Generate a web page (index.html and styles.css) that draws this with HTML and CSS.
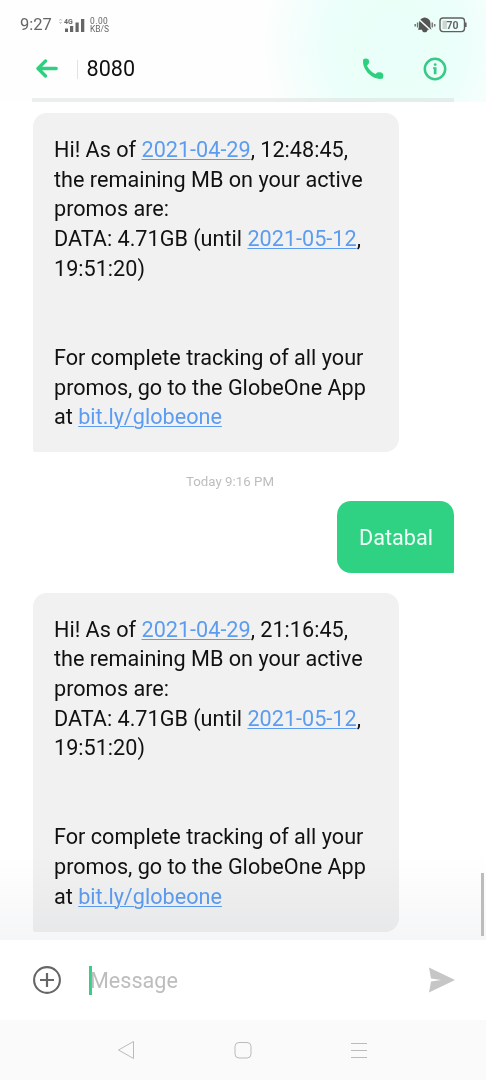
FILE: index.html
```html
<!DOCTYPE html>
<html lang="en">
<head>
<meta charset="utf-8">
<title>Messages</title>
<link rel="stylesheet" href="styles.css">
</head>
<body>
<div class="phone">
  <div class="top">
    <div class="status">
      <span class="clock">9:27</span>
      <svg class="signal" width="26" height="16" viewBox="0 0 26 16">
        <path d="M0.5 3.5 L1.5 2 L2.5 3.5 M0.5 5 L1.5 6.5 L2.5 5" fill="none" stroke="#aaa" stroke-width=".8"/>
        <text x="5" y="6.600" class="net">4G</text>
        <path d="M6 11.500h3v3.500H6zM11 9h3.200v6h-3.200zM16.500 5.500h3.200V15h-3.200zM22 2h3.300v13H22z" fill="#666"/>
      </svg>
      <div class="rate"><span>0.00</span><span>KB/S</span></div>
      <svg class="mute" width="22" height="18" viewBox="0 0 22 18">
        <path d="M10.500 1.500c-3.700.6-5.500 2.800-5.500 6v3.500l-1 2.700h13.500L16.500 11V7.500c0-3.200-1.900-5.400-6-6zM8 13.700h5.600c0 3.400-5.600 3.400-5.600 0z" fill="#555"/>
        <path d="M3.600 6.500v5M1.200 8v2.400M18.300 6.500v5M20.700 8v2.400" stroke="#777" stroke-width="1.500"/>
        <path d="M4 2.500l14 13" stroke="#effffa" stroke-width="1.700"/>
      </svg>
      <svg class="battery" width="28" height="16" viewBox="0 0 28 16">
        <rect x="1" y="1" width="24.500" height="13.600" rx="3" fill="none" stroke="#606060" stroke-width="1.400"/>
        <path d="M26.800 5.500v4.500" stroke="#606060" stroke-width="1.600"/>
        <path d="M3.500 3.500h4.500v8.500h-4.500z" fill="#ccd6d2"/>
        <text x="7.500" y="11.500" class="level">70</text>
      </svg>
    </div>
    <div class="header">
      <svg class="back" width="22" height="20" viewBox="0 0 22 20">
        <path d="M9.500 2L2 9.500l7.500 7.500M2.500 9.500h17.700" fill="none" stroke="#2dd07f" stroke-width="3.300" stroke-linecap="round" stroke-linejoin="round"/>
      </svg>
      <span class="divider"></span>
      <span class="title">8080</span>
      <svg class="call" width="22" height="22" viewBox="0 0 22 22">
        <path d="M1.300 1.200C2.500.2 5 .2 6.300 1.200 7.500 2.800 7.500 5 6.200 6.200L5 7.700C6.600 11.200 9.700 14.200 13.300 16L15 14.700C16.500 14 19.500 14.300 20.800 15.500 21.500 17 21.500 19 20.800 20.500 17 21.800 11.500 20.200 7 16 2.500 11.700.2 6 1.300 1.200Z" fill="#2dd07f"/>
      </svg>
      <svg class="info" width="24" height="24" viewBox="0 0 24 24">
        <circle cx="12" cy="12" r="10.200" fill="none" stroke="#38c989" stroke-width="2.500"/>
        <path d="M10 10.200h3.500v7h-2.700v-5.500h-.8z" fill="#38c989"/>
        <circle cx="12.200" cy="7.600" r="1.400" fill="#38c989"/>
      </svg>
    </div>
    <div class="rule"></div>
  </div>

  <div class="thread">
    <div class="bubble received">Hi! As of <a>2021-04-29</a>, 12:48:45,<br>the remaining MB on your active<br>promos are:<br>DATA: 4.71GB (until <a>2021-05-12</a>,<br>19:51:20)<br><br><br>For complete tracking of all your<br>promos, go to the GlobeOne App<br>at <a>bit.ly/globeone</a></div>
    <div class="stamp">Today 9:16 PM</div>
    <div class="bubble sent">Databal</div>
    <div class="bubble received second">Hi! As of <a>2021-04-29</a>, 21:16:45,<br>the remaining MB on your active<br>promos are:<br>DATA: 4.71GB (until <a>2021-05-12</a>,<br>19:51:20)<br><br><br>For complete tracking of all your<br>promos, go to the GlobeOne App<br>at <a>bit.ly/globeone</a></div>
    <div class="fade"></div>
    <div class="scrollbar"></div>
  </div>

  <div class="composer">
    <svg class="plus" width="28" height="28" viewBox="0 0 28 28">
      <circle cx="14" cy="14" r="12.900" fill="none" stroke="#666" stroke-width="2.100"/>
      <path d="M7 14h14M14 7v14" stroke="#666" stroke-width="2.200"/>
    </svg>
    <div class="field"><span class="caret"></span><span class="placeholder">Message</span></div>
    <svg class="send" width="28" height="28" viewBox="0 0 28 28">
      <path d="M1 1.500L27 14 1 26.500 3 15.500 13 14 3 12.500Z" fill="#c6c6c6"/>
    </svg>
  </div>

  <div class="nav">
    <svg width="18" height="20" viewBox="0 0 18 20"><path d="M16.500 1.500v17L1.500 10z" fill="none" stroke="#bbb" stroke-linejoin="round"/></svg>
    <svg width="18" height="18" viewBox="0 0 18 18"><rect x="1" y="1.500" width="16" height="15.500" rx="4" fill="none" stroke="#bbb"/></svg>
    <svg width="18" height="18" viewBox="0 0 18 18"><path d="M1 2.500h16M1 9.500h16M1 16.500h16" stroke="#bbb"/></svg>
  </div>
</div>
</body>
</html>
```

FILE: styles.css
```css
* { box-sizing: border-box; }

body {
  margin: 0;
  background: #fff;
  font-family: Roboto, "Liberation Sans", sans-serif;
}

svg { display: block; flex: none; }

.phone {
  width: 486px;
  height: 1080px;
  display: flex;
  flex-direction: column;
  overflow: hidden;
}

.top {
  height: 102px;
  background: radial-gradient(ellipse 135px 150px at 395px 45px, #eafff9 0%, #ecfffa 50%, rgba(255, 255, 255, 0) 100%), #fefefe;
}

.status {
  height: 40px;
  padding: 9px 20px 0;
  display: flex;
  align-items: center;
  color: #666;
}

.clock { width: 32px; font-size: 16.5px; line-height: 20px; }
.signal { margin-left: 7px; }
.net { font-size: 7px; font-weight: 700; fill: #666; }

.rate {
  display: flex;
  flex-direction: column;
  margin-left: 5px;
  font-size: 8.4px;
  line-height: 8px;
}

.rate span:first-child { letter-spacing: .5px; }

.mute { margin-left: auto; }
.battery { margin: 0 -1px 0 3px; }
.level { font-size: 10.5px; font-weight: 700; fill: #666; }

.header {
  height: 58px;
  padding: 0 39px 0 36px;
  display: flex;
  align-items: center;
}

.divider { width: 1px; height: 19px; margin: 0 8.500px 0 19px; background: #e2e2e2; }
.title { font-size: 21.6px; line-height: 26px; color: #111; }
.call { margin-left: auto; }
.info { margin-left: 39px; }

.rule { height: 4px; margin: 0 32px; background: rgba(215, 221, 219, .5); }

.thread {
  position: relative;
  height: 838px;
  padding: 11px 32px 0 33px;
  display: flex;
  flex-direction: column;
}

.bubble { font-size: 21.63px; line-height: 29.7px; white-space: nowrap; }

.received {
  width: 366px;
  height: 339px;
  padding: 22px 21px 20px;
  color: #111;
  background: #f1f1f1;
  border-radius: 14px 14px 14px 2px;
}

.received a { color: #5c9cf0; text-decoration: underline; text-decoration-thickness: 1px; text-underline-offset: 2px; }

.stamp {
  margin: 21px 27px 0 0;
  height: 18px;
  text-align: center;
  font-size: 13.3px;
  line-height: 18px;
  color: #bdbdbd;
}

.sent {
  align-self: flex-end;
  width: 117px;
  height: 72px;
  margin-top: 10px;
  padding: 22px 22px 20px;
  color: #effff7;
  background: #2fd283;
  border-radius: 14px 14px 1px 14px;
}

.second { margin-top: 19.5px; }

.fade {
  position: absolute;
  inset: auto 0 0;
  height: 85px;
  background: linear-gradient(#fff, #f5f6f7);
  mix-blend-mode: multiply;
}

.scrollbar {
  position: absolute;
  right: 2.5px;
  bottom: 4px;
  width: 2.5px;
  height: 63px;
  background: #bcbcbc;
}

.composer {
  height: 80px;
  padding: 0 30px 0 33px;
  display: flex;
  align-items: center;
  background: #fff;
}

.field { flex: 1; margin-left: 28px; display: flex; align-items: center; }
.caret { width: 3px; height: 29px; background: #38ce87; }
.placeholder { margin-left: -2px; padding-top: 2px; font-size: 21.6px; line-height: 28px; color: #bdbdbd; }

.nav {
  height: 60px;
  padding: 0 118px 0 117px;
  display: flex;
  align-items: center;
  justify-content: space-between;
  background: #fafafa;
}
```
